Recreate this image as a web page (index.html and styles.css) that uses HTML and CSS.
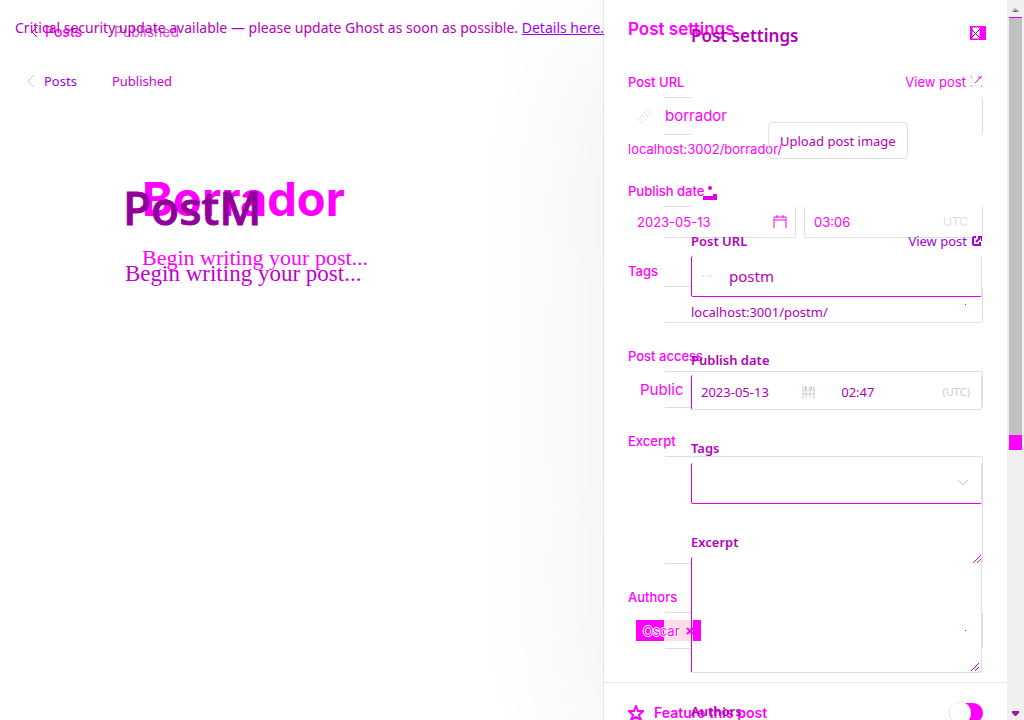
FILE: index.html
```html
<!DOCTYPE html>
<html lang="en">
<head>
<meta charset="utf-8">
<title>Post settings</title>
<link rel="stylesheet" href="styles.css">
</head>
<body>
<main class="overlay">
  <div class="layer draft">
    <section class="editor">
      <nav class="crumbs">
        <svg class="chevron" viewBox="0 0 8 12"><path d="M7 1 2 6l5 5"/></svg>
        <a href="#">Posts</a><span>Published</span>
      </nav>
      <h1>Borrador</h1>
      <p class="body-text">Begin writing your post...</p>
    </section>
    <aside class="panel">
      <div class="content">
        <header class="row head">
          <h2>Post settings</h2>
          <button class="close" aria-label="Close"><svg viewBox="0 0 16 14"><path fill="#f0f" d="M0 0h16v14H0z"/><path fill="#fff" d="M2 1h8v12H2z"/><path stroke="#808" d="m1 3 9 9M10 3l-9 9"/></svg></button>
        </header>
        <div class="group">
          <div class="row"><label for="a-url">Post URL</label><a class="view" href="#">View post <svg viewBox="0 0 12 12"><path d="M0 1h1M0 10h1M10 10h1M4 7l6-6M7 1h4"/></svg></a></div>
          <div class="field short tall"><svg class="link" viewBox="0 0 16 16"><path d="m6 10 4-4M7 5l3-3q3-1 4 1 1 2-1 3l-3 3M9 11l-3 3q-3 1-4-1-1-2 1-3l3-3"/></svg><input id="a-url" value="borrador"></div>
          <p class="hint">localhost:3002/borrador/</p>
        </div>
        <div class="group">
          <label for="a-date">Publish date</label>
          <div class="dates">
            <div class="field low"><input id="a-date" value="2023-05-13"><svg class="cal" viewBox="0 0 14 14"><path d="M1 13V2h12v11M1 5h12M4 0v3M10 0v3"/></svg></div>
            <div class="field plain"><input aria-label="Time" value="03:06"><span class="utc">UTC</span></div>
          </div>
        </div>
        <div class="group">
          <label for="a-tags">Tags</label>
          <div class="field low"><input id="a-tags"><i class="dot"></i></div>
        </div>
        <div class="group">
          <label for="a-access">Post access</label>
          <div class="field high"><select id="a-access"><option>Public</option></select></div>
        </div>
        <div class="group">
          <label for="a-excerpt">Excerpt</label>
          <div class="field high area"><textarea id="a-excerpt"></textarea><svg class="grip" viewBox="0 0 9 9"><path d="m0 8 8-8M4 8l4-4"/></svg></div>
        </div>
        <div class="group">
          <label for="a-authors">Authors</label>
          <div class="field short"><button class="chip" id="a-authors">Oscar <svg viewBox="0 0 8 8"><path d="m1 1 6 6M7 1 1 7"/></svg></button><i class="dot"></i></div>
        </div>
      </div>
      <div class="feature">
        <svg class="star" viewBox="0 0 16 16"><path d="m8 1 2 5h5l-4 4 2 5-5-3-5 3 2-5-4-4h5z"/></svg>
        <label for="feature">Feature this post</label>
        <input class="toggle" type="checkbox" id="feature" checked>
      </div>
    </aside>
    <div class="scrollbar">
      <svg viewBox="0 0 7 5"><path d="M0 3 3 0l4 3v1H0z" fill="#aaa"/><path d="M2 3h3v1H2z" fill="#b0b"/></svg>
      <div class="thumb"></div>
      <svg class="down" viewBox="0 0 7 5"><path d="M0 0h7v2L4 5H3L0 2z" fill="#b0b"/><path d="M2 1h3v2H2z" fill="#555"/></svg>
    </div>
  </div>

  <div class="layer saved">
    <section class="editor">
      <p class="alert">Critical security update available — please update Ghost as soon as possible. <a href="#">Details here.</a></p>
      <nav class="crumbs">
        <svg class="chevron" viewBox="0 0 8 14"><path d="M7 1 1 7l6 6"/></svg>
        <a href="#">Posts</a><span>Published</span>
      </nav>
      <h1>PostM</h1>
      <p class="body-text">Begin writing your post...</p>
    </section>
    <aside class="panel">
      <h2>Post settings</h2>
      <button class="upload">Upload post image</button>
      <svg class="upload-icon" viewBox="0 0 14 14"><path d="M0 10h10V8h4v6H0z"/><circle cx="7" cy="2" r="2"/></svg>
      <div class="group">
        <div class="row"><label for="b-url">Post URL</label><a class="view" href="#">View post <svg viewBox="0 0 10 10"><path d="M4 1H2L1 2v6l1 1h6V6M4 6l4-4M6 1h4v4"/></svg></a></div>
        <div class="field"><span class="faint">···</span><input id="b-url" value="postm"></div>
        <p class="hint">localhost:3001/postm/</p>
      </div>
      <div class="group">
        <label for="b-date">Publish date</label>
        <div class="field pair"><input id="b-date" value="2023-05-13"><svg class="cal" viewBox="0 0 13 14"><path d="M1 1v13M12 1v13M4 1v12M8 1v12M1 5h12M1 9h12"/><path stroke="#d0d" d="M3 3h1M9 3h1"/></svg><input aria-label="Time" value="02:47"><span class="utc">(UTC)</span></div>
      </div>
      <div class="group">
        <label for="b-tags">Tags</label>
        <div class="field"><input id="b-tags"><svg class="caret" viewBox="0 0 12 8"><path d="m1 1 5 5 5-5"/></svg></div>
      </div>
      <div class="group">
        <label for="b-excerpt">Excerpt</label>
        <div class="field area"><textarea id="b-excerpt"></textarea><svg class="grip" viewBox="0 0 9 9"><path d="m0 8 8-8M4 8l4-4"/></svg></div>
      </div>
      <div class="group"><strong>Authors</strong></div>
    </aside>
  </div>
</main>
</body>
</html>
```

FILE: styles.css
```css
* { box-sizing: border-box; }
body { margin: 0; background: #fff; }
h1, h2, p { margin: 0; }
button, input, select, textarea { font: inherit; color: inherit; background: none; border: 0; padding: 0; margin: 0; min-width: 0; border-radius: 0; outline: 0; }
select { appearance: none; }
textarea { resize: none; }
a { text-decoration: none; color: inherit; }
svg { fill: none; stroke: currentColor; flex: none; }

.overlay { display: grid; height: 100vh; overflow: hidden; }
.layer { grid-area: 1 / 1; display: grid; grid-template-columns: minmax(0, 1fr) 404px 17px; min-height: 0; height: 100vh; }
.row { display: flex; justify-content: space-between; }
.group { display: flex; flex-direction: column; gap: 5px; }
.field { display: flex; align-items: center; }
.field input, .field select, .field textarea { flex: 1; width: 100%; }
.area textarea { height: 100%; }
.area { align-items: flex-end; }
.grip { width: 9px; height: 9px; }
.crumbs { display: flex; align-items: center; line-height: 20px; }
.body-text { font-family: "Liberation Serif", serif; line-height: 28px; }

.draft { font: 14px/20px Inter, sans-serif; color: #f0f; }
.draft .editor { padding: 22px 0 0 30px; }
.draft .crumbs span { margin-left: 32px; color: #e34be3; }
.draft .crumbs a { margin-left: 7px; font-weight: 500; }
.draft .chevron { width: 8px; height: 12px; color: #a0a; }
.draft h1 { margin: 127px 0 0 112px; font-size: 47px; line-height: 60px; font-weight: 700; }
.draft .body-text { margin: 15px 0 0 112px; font-size: 22px; }
.draft .panel { background: #fff; border-left: 1px solid #e5e5e5; box-shadow: 0 40px 160px rgba(0, 0, 0, .08); padding-top: 17px; }
.draft .content { display: flex; flex-direction: column; gap: 23px; padding: 0 24px; border-bottom: 1px solid #e3e5e6; padding-bottom: 33px; }
.draft .head { margin-bottom: 8px; }
.draft h2 { font-size: 17px; line-height: 24px; font-weight: 600; }
.close { width: 16px; height: 14px; margin: 9px -3px 0 0; }
.close svg { display: block; }
.draft label { font-size: 13px; font-weight: 500; }
.view { display: flex; align-items: center; gap: 5px; font-size: 13px; }
.view svg { width: 12px; height: 12px; }
.draft .field { --edge: linear-gradient(#dddfe0, #dddfe0); height: 37px; padding-left: 12px; border-right: 1px solid #dddfe0; border-radius: 3px; background: var(--edge) 37px 0 / 26px 1px no-repeat, var(--edge) 37px 100% / 26px 1px no-repeat; }
.draft .tall { height: 38px; }
.draft .low { background-size: 26px 1px, 100% 1px; background-position: 37px 0, 37px 100%; }
.draft .high { background-size: 100% 1px, 26px 1px; }
.draft .plain { background: var(--edge) 0 100% / 100% 1px no-repeat; border-left: 1px solid #dddfe0; padding-left: 8px; }
.draft .area { height: 108px; }
.draft .field input, .draft select { font-size: 15px; }
.link { width: 16px; height: 16px; margin: 0 12px 0 -3px; color: #ddd; stroke-dasharray: 2 1; }
.draft .hint { font-size: 13px; line-height: 18px; }
.dates { display: grid; grid-template-columns: 168px minmax(0, 1fr); gap: 8px; }
.draft .dates .field { height: 32px; padding-left: 9px; }
.draft .dates input { font-size: 13px; }
.cal { width: 14px; height: 14px; margin-right: 8px; }
.utc { font-size: 12px; color: #dcdfe2; margin-right: 14px; }
.dot { width: 1px; height: 1px; background: #c0c; margin-right: 16px; }
.draft .field .chip { display: flex; align-items: center; gap: 6px; height: 21px; margin: 0 auto 0 -4px; padding: 0 7px; font-size: 13px; background: linear-gradient(90deg, #f0f 28px, #ffdce8 28px 57px, #f0f 57px); text-shadow: 1px 0 #fff, -1px 0 #fff, 0 1px #fff, 0 -1px #fff; }
.chip svg { width: 8px; height: 8px; stroke-width: 2; }
.feature { display: flex; align-items: center; gap: 10px; padding: 20px 24px 0; }
.star { width: 16px; height: 16px; stroke-width: 2; }
.feature label { flex: 1; }
.draft .feature label { font-size: 14px; font-weight: 600; }
.feature .toggle { appearance: none; width: 34px; height: 20px; border-radius: 10px; background: #f0f; display: flex; align-items: center; }
.toggle::before { content: ""; width: 20px; height: 20px; border-radius: 10px; background: #fff; border: 1px dotted #ddd; }

.scrollbar { display: flex; flex-direction: column; align-items: center; background: #f0f0f0; padding: 8px 2px 7px; }
.scrollbar svg { width: 7px; height: 5px; stroke: none; }
.thumb { width: 100%; height: 433px; margin-top: 4px; border-top: 1px solid #d0d; border-bottom: 15px solid #f0f; background: #c1c1c1; }
.scrollbar .down { margin-top: auto; }

.saved { font: 14px/20px "Noto Sans", sans-serif; color: #b400b8; }
.saved .editor { padding: 18px 0 0 15px; }
.alert { white-space: nowrap; }
.alert a { color: #a000f0; text-decoration: underline; }
.saved .crumbs { margin: 33px 0 0 12px; font-size: 13px; }
.saved .crumbs a { margin-left: 9px; color: #a000e0; }
.saved .crumbs span { margin-left: 35px; color: #c800d8; }
.saved .chevron { width: 8px; height: 14px; color: #ccc; }
.saved h1 { margin: 86px 0 0 108px; font-size: 46px; line-height: 60px; font-weight: 500; -webkit-text-stroke: 1px #92009a; color: #92009a; }
.saved .body-text { margin: 23px 0 0 110px; font-size: 23px; color: #c000cc; }
.saved .panel { display: flex; flex-direction: column; padding: 24px 25px 0 88px; }
.saved h2 { font-size: 17px; line-height: 24px; font-weight: 600; }
.saved .upload { height: 37px; margin: 74px 0 0 77px; align-self: flex-start; padding: 0 11px; border: 1px solid #e0e2e3; border-radius: 4px; white-space: nowrap; font-size: 13px; }
.upload-icon { width: 14px; height: 14px; margin: 27px 0 31px 12px; fill: #e000e8; stroke: none; }
.saved .group + .group { margin-top: 28px; }
.saved label, .saved strong { font-size: 13px; font-weight: 600; }
.saved .view svg { width: 10px; height: 10px; stroke-width: 2; }
.saved .view { color: #a000d8; }
.saved .field { height: 41px; padding-left: 9px; border-left: 1px solid #d000d8; border-right: 1px solid #dddfe0; border-bottom: 1px solid #e000e0; border-radius: 2px; }
.faint { width: 28px; color: #ddd; }
.saved .field input { font-size: 15px; }
.saved .hint { font-size: 13px; }
.saved .pair { height: 35px; border-bottom-color: #dddfe0; }
.saved .pair input { font-size: 13px; }
.saved .pair .cal { width: 13px; margin-right: 26px; color: #ccc; }
.saved .utc { font-size: 11px; color: #ccc; margin-right: 11px; }
.saved .area { height: 116px; border-bottom-color: #dddfe0; }
.saved .area .grip { margin-right: 1px; }
.caret { width: 12px; height: 8px; margin-right: 12px; color: #c4c4c4; }
```
